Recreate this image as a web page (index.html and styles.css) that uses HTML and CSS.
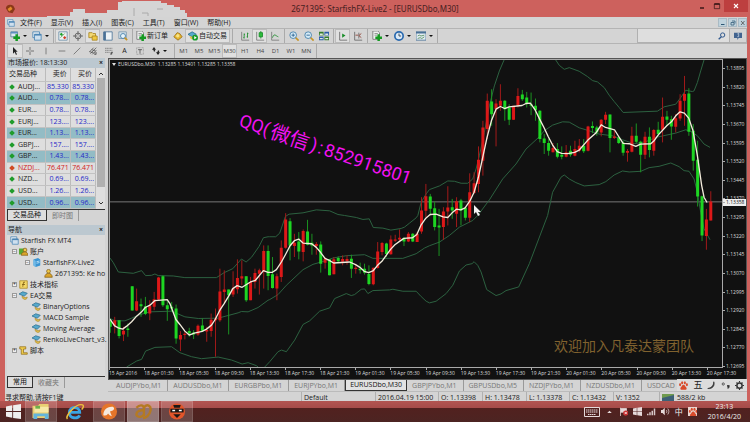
FILE: index.html
```html
<!DOCTYPE html>
<html lang="zh-CN">
<head>
<meta charset="utf-8">
<title>2671395: StarfishFX-Live2 - [EURUSDbo,M30]</title>
<link rel="stylesheet" href="styles.css">
</head>
<body>
<svg class="defs" aria-hidden="true">
  <symbol id="i-add" viewBox="0 0 12 12"><path d="M1 1h8v6H1z" fill="#dce8f0" stroke="#5b7f99"/><path d="M1 2h8" stroke="#5b8fc0" stroke-width="2"/><path d="M8 4v8M4 8h8" stroke="#159a22" stroke-width="3"/></symbol>
  <symbol id="i-windows" viewBox="0 0 12 12"><path d="M1 1h8v7H1z" fill="#e3ecf3" stroke="#4c86b5"/><path d="M3 4h8v7H3z" fill="#cfe0ee" stroke="#4c86b5"/><path d="M3 4.5h8" stroke="#4c86b5" stroke-width="2"/></symbol>
  <symbol id="i-quotes" viewBox="0 0 12 12"><path d="M1 1h10v10H1z" fill="#eef2f2" stroke="#6a8fa8"/><path d="M4 2l2 2-2 2-2-2z" fill="#18a02a"/><path d="M8 6l2 2-2 2-2-2z" fill="#d03a22"/><path d="M3 8l5-5" stroke="#5aa04a"/></symbol>
  <symbol id="i-target" viewBox="0 0 12 12"><circle cx="6" cy="6" r="3.5" fill="none" stroke="#555"/><path d="M6 0v5M6 7v5M0 6h5M7 6h5" stroke="#555"/></symbol>
  <symbol id="i-folder" viewBox="0 0 12 12"><path d="M1 2h4l1 1h3v5H1z" fill="#f3d873" stroke="#a98521"/><path d="M5 6h6v5H5z" fill="#f0c83e" stroke="#a98521"/></symbol>
  <symbol id="i-terminal" viewBox="0 0 12 12"><path d="M1 1h10v10H1z" fill="#eef3f6" stroke="#4a7196"/><path d="M2 1v10" stroke="#4a7196" stroke-width="3"/></symbol>
  <symbol id="i-tester" viewBox="0 0 12 12"><path d="M1 1h9v8H1z" fill="#d4e2ec" stroke="#7b98ad"/><circle cx="6" cy="6" r="3" fill="#e7f3fa" stroke="#3c78a5"/><path d="M8 8l3 3" stroke="#c79426" stroke-width="2"/></symbol>
  <symbol id="i-order" viewBox="0 0 12 12"><path d="M1 0h6l2 2v8H1z" fill="#eef0f0" stroke="#777"/><path d="M3 3h4M3 5h3" stroke="#888"/><path d="M8 4v8M4 8h8" stroke="#159a22" stroke-width="3"/></symbol>
  <symbol id="i-gold" viewBox="0 0 12 12"><path d="M1 7l4-5 3 1 3 4-5 4z" fill="#e5b62d" stroke="#9a701a"/><path d="M3 6l3-3 2 3-2 2z" fill="#f8e386"/></symbol>
  <symbol id="i-expert" viewBox="0 0 12 12"><path d="M0 4l5-3 6 2-4 4z" fill="#57a9cb" stroke="#2d6f91"/><path d="M4 7c0 5 7 6 7 1l-3 1z" fill="#e2bd4a" stroke="#9d7a21" stroke-width=".7"/></symbol>
  <symbol id="i-auto" viewBox="0 0 12 12"><path d="M0 4l5-3 5 3-5 3z" fill="#57a9cb" stroke="#2d6f91"/><path d="M2 6c0 5 5 5 5 0l-2 1z" fill="#e2bd4a"/><circle cx="8.500" cy="8" r="3.500" fill="#169b28"/><path d="M7.500 6v4l3-2z" fill="#fff"/></symbol>
  <symbol id="i-bars" viewBox="0 0 12 12"><path d="M2 1v10h9" fill="none" stroke="#777"/><path d="M5 3v6M4 8h1M5 4h1M9 2v6M8 7h1M9 3h1" stroke="#178c27"/></symbol>
  <symbol id="i-candle" viewBox="0 0 12 12"><path d="M2 1v10h9" fill="none" stroke="#777"/><path d="M7 0v9" stroke="#178c27"/><path d="M5 2h4v5H5z" fill="#2bbd3a" stroke="#178c27"/></symbol>
  <symbol id="i-line" viewBox="0 0 12 12"><path d="M2 1v10h9" fill="none" stroke="#777"/><path d="M3 8c2-6 4-2 7-1" fill="none" stroke="#178c27"/></symbol>
  <symbol id="i-zoomin" viewBox="0 0 12 12"><path d="M7.500 7.500l4 4" stroke="#c79426" stroke-width="2"/><circle cx="5" cy="5" r="4" fill="#d5ebf7" stroke="#3c78a5"/><path d="M5 3v4M3 5h4" stroke="#225a8c"/></symbol>
  <symbol id="i-zoomout" viewBox="0 0 12 12"><path d="M7.500 7.500l4 4" stroke="#c79426" stroke-width="2"/><circle cx="5" cy="5" r="4" fill="#d5ebf7" stroke="#3c78a5"/><path d="M3 5h4" stroke="#225a8c"/></symbol>
  <symbol id="i-tile" viewBox="0 0 12 12"><path d="M0 1h5.500v4.500H0zM6.500 6.500H12V11H6.500z" fill="#357b2c"/><path d="M6.500 1H12v4.500H6.500zM0 6.500h5.500V11H0z" fill="#2b5ba8"/><path d="M1 3h3.500v2H1zM7.500 3H11v2H7.500zM1 8.500h3.500V10H1zM7.500 8.500H11V10H7.500z" fill="#dfe9df"/></symbol>
  <symbol id="i-scroll" viewBox="0 0 12 12"><path d="M2 1v10h9" fill="none" stroke="#666"/><path d="M5 3v5l4-2.500z" fill="#178c27"/></symbol>
  <symbol id="i-shift" viewBox="0 0 12 12"><path d="M2 1v10h9M7 2v7" fill="none" stroke="#666"/><path d="M10 3L7 5.500 10 8M3 5h3" fill="none" stroke="#8d4032"/></symbol>
  <symbol id="i-clock" viewBox="0 0 12 12"><circle cx="6" cy="6" r="5" fill="#dceaf6" stroke="#2868ae" stroke-width="2"/><path d="M6 3v3h2.500" fill="none" stroke="#234"/></symbol>
  <symbol id="i-template" viewBox="0 0 12 12"><path d="M0 1h12v10H0z" fill="#e4edf3" stroke="#4a7196"/><path d="M0 2h12" stroke="#4a7196" stroke-width="2"/><path d="M2 6l2-1 2 1 4-1M2 9l3-1 2 1 3-2" fill="none" stroke="#4e8a58"/></symbol>
  <symbol id="i-arrow" viewBox="0 0 12 12"><path d="M3 0v10l2.500-2.500L7.500 12 9 11 7 7h3z" fill="#222"/></symbol>
  <symbol id="i-cross" viewBox="0 0 12 12"><path d="M6 0v5M6 7v5M0 6h5M7 6h5" stroke="#444"/></symbol>
  <symbol id="i-v" viewBox="0 0 12 12"><path d="M6 1v10" stroke="#555"/></symbol>
  <symbol id="i-h" viewBox="0 0 12 12"><path d="M1 6h10" stroke="#555"/></symbol>
  <symbol id="i-trend" viewBox="0 0 12 12"><path d="M1 11L11 1" stroke="#555"/></symbol>
  <symbol id="i-channel" viewBox="0 0 12 12"><path d="M0 8l7-7M2 10l9-9M5 11l6-6M1 7l6 2M4 4l6 2" stroke="#444"/><path d="M8 9h4M8 11h3" stroke="#222"/></symbol>
  <symbol id="i-fibo" viewBox="0 0 12 12"><path d="M0 2h11M0 5h11M0 8h7" stroke="#666" stroke-dasharray="2 .5"/><path d="M9 12V8h3M9 10h2" fill="none" stroke="#222"/></symbol>
  <symbol id="i-label" viewBox="0 0 12 12"><path d="M1 1h10v10H1z" fill="none" stroke="#777" stroke-dasharray="1 1"/><path d="M3 4h6M6 4v6" stroke="#333"/></symbol>
  <symbol id="i-shapes" viewBox="0 0 12 12"><path d="M3 0L0 4h2l1 3 2-1-1-2h2zM9 12L6 8h2l1-3 2 1-1 2h2z" fill="#222"/></symbol>
  <symbol id="i-find" viewBox="0 0 12 12"><circle cx="7" cy="4.500" r="3.200" fill="none" stroke="#31598e" stroke-width="1.500"/><path d="M5 7l-4 4" stroke="#31598e" stroke-width="2"/></symbol>
  <symbol id="i-chat" viewBox="0 0 12 12"><path d="M0 1h12v8H7l-2 3V9H0z" fill="#41638f"/><path d="M5 3l2-1v5H5" fill="none" stroke="#dce4ee"/></symbol>
  <symbol id="i-user" viewBox="0 0 12 12"><circle cx="6" cy="3" r="2.500" fill="#efc94b" stroke="#86621a"/><path d="M1 11c0-7 10-7 10 0z" fill="#dba52a" stroke="#86621a"/></symbol>
  <symbol id="i-users" viewBox="0 0 12 12"><path d="M0 2h7v8H0z" fill="#57a932"/><circle cx="8" cy="4" r="2.500" fill="#efc94b" stroke="#86621a"/><path d="M3 11c0-6 9-6 9 0z" fill="#dba52a" stroke="#86621a"/></symbol>
  <symbol id="i-server" viewBox="0 0 12 12"><path d="M2 2l6-2 3 2v8l-6 2-3-2z" fill="#3c95d2"/><path d="M2 2l3 2v8l-3-2z" fill="#72bbe8"/><path d="M6 5l4-1M6 7l4-1" stroke="#d7effb"/></symbol>
  <symbol id="i-func" viewBox="0 0 12 12"><path d="M1 1h10v10H1z" fill="#f2d667" stroke="#a98521"/><path d="M8 3H6L5 9M4 6h4" fill="none" stroke="#76540d"/></symbol>
  <symbol id="i-script" viewBox="0 0 12 12"><path d="M1 1h8v3H6v5h5v2H3V4H1z" fill="#efcc4b" stroke="#94701c"/></symbol>
  <symbol id="i-paw" viewBox="0 0 12 12"><path d="M6 5c2 0 2 2 4 4 1 3-2 3-4 2.500-2 .5-5 .5-4-2.500 2-2 2-4 4-4z"/><ellipse cx="1.500" cy="5" rx="1.400" ry="1.900"/><ellipse cx="4.200" cy="2.200" rx="1.400" ry="2"/><ellipse cx="7.800" cy="2.200" rx="1.400" ry="2"/><ellipse cx="10.500" cy="5" rx="1.400" ry="1.900"/></symbol>
  <symbol id="i-win" viewBox="0 0 12 12"><path d="M0 2l5-1v4.600H0zM5.700.9L12 0v5.600H5.700zM0 6.300h5V11l-5-1zM5.700 6.300H12V12l-6.300-.9z"/></symbol>
</svg>

<div class="app">
  <header class="titlebar">
    <svg class="app-icon" viewBox="0 0 12 12"><path d="M1 5c1-4 5-5 9-3l2 4-3 5-5-1z" fill="#8a3818"/><path d="M3 6l4-3 2 3-4 3z" fill="#e28b2a"/></svg>
    <h1>2671395: StarfishFX-Live2 - [EURUSDbo,M30]</h1>
    <div class="win-buttons">
      <button aria-label="最小化"><svg viewBox="0 0 12 12"><path d="M3 9h6" stroke="#2a1010" stroke-width="2"/></svg></button>
      <button aria-label="最大化"><svg viewBox="0 0 12 12"><path d="M2 3h8v7H2z" fill="none" stroke="#2a1010"/><path d="M2 3h8" stroke="#2a1010" stroke-width="2"/></svg></button>
      <button class="close" aria-label="关闭"><svg viewBox="0 0 12 12"><path d="M3 3l6 6M9 3L3 9" stroke="#fff" stroke-width="1.600"/></svg></button>
    </div>
    <svg class="mask" viewBox="0 0 140 18" aria-hidden="true"><path d="M0 17v-1h23v-4h3V9h12v4h22v-3h11V2h4V1h39v2h6v2h7v2h6v3h5v3h2v4z" fill="#d5d5d5"/><path d="M87 8v8M95 13h6v3M110 9h6" fill="none" stroke="#aaa"/></svg>
  </header>

  <div class="frame">
    <nav class="menubar">
      <svg class="ic"><use href="#i-windows"/></svg>
      <button>文件(F)</button><button>显示(V)</button><button>插入(I)</button><button>图表(C)</button><button>工具(T)</button><button>窗口(W)</button><button>帮助(H)</button>
      <div class="mdi">
        <button aria-label="最小化子窗口"><svg viewBox="0 0 12 12"><path d="M2 9h7" stroke="#2d5674" stroke-width="2"/></svg></button>
        <button aria-label="还原子窗口"><svg viewBox="0 0 12 12"><path d="M4 2h6v5M2 5h6v5H2z" fill="none" stroke="#2d5674" stroke-width="1.500"/></svg></button>
        <button aria-label="关闭子窗口"><svg viewBox="0 0 12 12"><path d="M2 2l7 8M9 2l-7 8" stroke="#444" stroke-width="1.500"/></svg></button>
      </div>
    </nav>

    <div class="toolbar">
      <div class="group">
        <button class="drop" aria-label="新图表"><svg class="ic"><use href="#i-add"/></svg></button>
        <button class="drop" aria-label="配置文件"><svg class="ic"><use href="#i-windows"/></svg></button>
      </div>
      <div class="group">
        <button class="on" aria-label="市场报价"><svg class="ic"><use href="#i-quotes"/></svg></button>
        <button aria-label="数据窗口"><svg class="ic"><use href="#i-target"/></svg></button>
        <button class="on" aria-label="导航"><svg class="ic"><use href="#i-folder"/></svg></button>
        <button aria-label="终端"><svg class="ic"><use href="#i-terminal"/></svg></button>
        <button aria-label="策略测试"><svg class="ic"><use href="#i-tester"/></svg></button>
      </div>
      <div class="group wide">
        <button class="text"><svg class="ic"><use href="#i-order"/></svg>新订单</button>
        <button aria-label="语言编辑器"><svg class="ic"><use href="#i-gold"/></svg></button>
        <button class="text on"><svg class="ic"><use href="#i-auto"/></svg>自动交易</button>
      </div>
      <div class="group">
        <button aria-label="柱状图"><svg class="ic"><use href="#i-bars"/></svg></button>
        <button class="on" aria-label="蜡烛图"><svg class="ic"><use href="#i-candle"/></svg></button>
        <button aria-label="折线图"><svg class="ic"><use href="#i-line"/></svg></button>
      </div>
      <div class="group">
        <button aria-label="放大"><svg class="ic"><use href="#i-zoomin"/></svg></button>
        <button aria-label="缩小"><svg class="ic"><use href="#i-zoomout"/></svg></button>
        <button aria-label="平铺"><svg class="ic"><use href="#i-tile"/></svg></button>
      </div>
      <div class="group">
        <button class="on" aria-label="自动滚动"><svg class="ic"><use href="#i-scroll"/></svg></button>
        <button aria-label="图表平移"><svg class="ic"><use href="#i-shift"/></svg></button>
      </div>
      <div class="group">
        <button class="drop" aria-label="指标"><svg class="ic"><use href="#i-order"/></svg></button>
        <button class="drop" aria-label="周期"><svg class="ic"><use href="#i-clock"/></svg></button>
        <button class="drop" aria-label="模板"><svg class="ic"><use href="#i-template"/></svg></button>
      </div>
      <form class="search">
        <input type="text" aria-label="搜索">
        <button type="button" aria-label="查找"><svg class="ic"><use href="#i-find"/></svg></button>
        <button type="button" class="chat" aria-label="消息"><svg class="ic"><use href="#i-chat"/></svg></button>
      </form>
    </div>

    <div class="toolbar second">
      <div class="group draw">
        <button class="on" aria-label="光标"><svg class="ic"><use href="#i-arrow"/></svg></button>
        <button aria-label="十字线"><svg class="ic"><use href="#i-cross"/></svg></button>
        <button aria-label="垂直线"><svg class="ic"><use href="#i-v"/></svg></button>
        <button aria-label="水平线"><svg class="ic"><use href="#i-h"/></svg></button>
        <button aria-label="趋势线"><svg class="ic"><use href="#i-trend"/></svg></button>
        <button aria-label="通道"><svg class="ic"><use href="#i-channel"/></svg></button>
        <button aria-label="斐波那契"><svg class="ic"><use href="#i-fibo"/></svg></button>
        <button class="letter">A</button>
        <button aria-label="文字标签"><svg class="ic"><use href="#i-label"/></svg></button>
        <button class="drop" aria-label="箭头"><svg class="ic"><use href="#i-shapes"/></svg></button>
      </div>
      <div class="group periods">
        <button>M1</button><button>M5</button><button>M15</button><button class="on">M30</button><button>H1</button><button>H4</button><button>D1</button><button>W1</button><button>MN</button>
      </div>
    </div>

    <div class="work">
      <aside class="side">
        <section class="panel">
          <h2>市场报价: 18:13:30 <button aria-label="关闭市场报价">×</button></h2>
          <div class="quotes">
            <table>
              <thead><tr><th>交易品种</th><th>卖价</th><th>买价</th></tr></thead>
              <tbody>
                <tr><td>AUDJ...</td><td>85.330</td><td>85.330</td></tr>
                <tr class="alt"><td>AUD...</td><td>0.78...</td><td>0.78...</td></tr>
                <tr><td>EUR...</td><td>0.78...</td><td>0.78...</td></tr>
                <tr><td>EURJ...</td><td>123....</td><td>123....</td></tr>
                <tr class="alt"><td>EUR...</td><td>1.13...</td><td>1.13...</td></tr>
                <tr><td>GBPJ...</td><td>157....</td><td>157....</td></tr>
                <tr class="alt"><td>GBP...</td><td>1.43...</td><td>1.43...</td></tr>
                <tr class="down"><td>NZDJ...</td><td>76.471</td><td>76.471</td></tr>
                <tr><td>NZD...</td><td>0.69...</td><td>0.69...</td></tr>
                <tr><td>USD...</td><td>1.26...</td><td>1.26...</td></tr>
                <tr class="alt"><td>USD...</td><td>0.96...</td><td>0.96...</td></tr>
              </tbody>
            </table>
            <div class="scroll"><svg viewBox="0 0 8 8"><path d="M2 5l2-2 2 2" fill="none" stroke="#333"/></svg><i></i><svg viewBox="0 0 8 8"><path d="M2 3l2 2 2-2" fill="none" stroke="#333"/></svg></div>
          </div>
          <div class="subtabs"><button class="on">交易品种</button><button>即时图</button></div>
        </section>
        <section class="panel grow">
          <h2>导航 <button aria-label="关闭导航">×</button></h2>
          <ul class="tree">
            <li><svg class="ic"><use href="#i-windows"/></svg>Starfish FX MT4</li>
            <li class="l1"><b>−</b><svg class="ic"><use href="#i-users"/></svg>账户</li>
            <li class="l2"><b>−</b><svg class="ic"><use href="#i-server"/></svg>StarfishFX-Live2</li>
            <li class="l4"><svg class="ic"><use href="#i-user"/></svg>2671395: Ke ho</li>
            <li class="l1"><b>+</b><svg class="ic"><use href="#i-func"/></svg>技术指标</li>
            <li class="l1"><b>−</b><svg class="ic"><use href="#i-expert"/></svg>EA交易</li>
            <li class="l3"><svg class="ic"><use href="#i-expert"/></svg>BinaryOptions</li>
            <li class="l3"><svg class="ic"><use href="#i-expert"/></svg>MACD Sample</li>
            <li class="l3"><svg class="ic"><use href="#i-expert"/></svg>Moving Average</li>
            <li class="l3"><svg class="ic"><use href="#i-expert"/></svg>RenkoLiveChart_v3.</li>
            <li class="l1"><b>+</b><svg class="ic"><use href="#i-script"/></svg>脚本</li>
          </ul>
          <div class="subtabs"><button class="on">常用</button><button>收藏夹</button></div>
        </section>
      </aside>

      <main class="main">
        <div class="chart">
          <div class="plot">
            <svg id="plot" viewBox="15 12 1839 924" preserveAspectRatio="none" role="img" aria-label="EURUSDbo M30"></svg>
            <p class="caption">EURUSDbo,M30&nbsp; 1.13285 1.13401 1.13285 1.13358</p>
            <p class="contact">QQ(<span>微信</span>)<span class="colon">:</span>852915801</p>
            <p class="welcome">欢迎加入凡泰达蒙团队</p>
            <svg class="cursor" viewBox="0 0 8 12"><path d="M1 0v9l2-2 2 4 2-1-2-3h3z" fill="#f2f2f2"/></svg>
          </div>
          <ol class="prices">
            <li>1.13895</li><li>1.13820</li><li>1.13745</li><li>1.13670</li><li>1.13595</li><li>1.13520</li><li>1.13445</li><li>1.13370</li><li>1.13295</li><li>1.13220</li><li>1.13145</li><li>1.13070</li><li>1.12995</li><li>1.12920</li><li>1.12845</li><li>1.12770</li><li>1.12695</li>
            <li class="now">1.13358</li>
          </ol>
          <ol class="times">
            <li>15 Apr 2016</li><li>18 Apr 01:30</li><li>18 Apr 05:30</li><li>18 Apr 09:30</li><li>18 Apr 13:30</li><li>18 Apr 17:30</li><li>18 Apr 21:30</li><li>19 Apr 01:30</li><li>19 Apr 05:30</li><li>19 Apr 09:30</li><li>19 Apr 13:30</li><li>19 Apr 17:30</li><li>19 Apr 21:30</li><li>20 Apr 01:30</li><li>20 Apr 05:30</li><li>20 Apr 09:30</li><li>20 Apr 13:30</li><li>20 Apr 17:30</li>
          </ol>
        </div>
        <div class="tabs">
          <button>AUDJPYbo,M1</button><button>AUDUSDbo,M1</button><button>EURGBPbo,M1</button><button>EURJPYbo,M1</button><button class="on">EURUSDbo,M30</button><button>GBPJPYbo,M1</button><button>GBPUSDbo,M5</button><button>NZDJPYbo,M1</button><button>NZDUSDbo,M1</button><button>USDCAD</button>
          <div class="ime"><svg class="ic paw"><use href="#i-paw"/></svg><span>五</span><svg class="ic" viewBox="0 0 12 12"><path d="M9 1c2 5-2 10-8 9 5-1 8-4 8-9z" fill="#333" stroke="#333"/></svg><svg class="ic" viewBox="0 0 12 12"><circle cx="3" cy="4" r="1.500" fill="none" stroke="#333"/><path d="M8 6h3c0 3-1 4-2 4" fill="#333" stroke="#333"/></svg><svg class="ic" viewBox="0 0 12 12"><circle cx="6" cy="6" r="3.500" fill="none" stroke="#333" stroke-width="2"/><path d="M6 0v2M6 10v2M0 6h2M10 6h2M2 2l1 1M9 9l1 1M10 2L9 3M3 9l-1 1" stroke="#333" stroke-width="1.500"/></svg></div>
        </div>
      </main>
    </div>

    <footer class="status">
      <span>寻求帮助,请按F1键</span><span>Default</span><span>2016.04.19 15:00</span><span>O: 1.13398</span><span>H: 1.13478</span><span>L: 1.13378</span><span>C: 1.13432</span><span>V: 1352</span><span class="net"><svg viewBox="0 0 12 7"><path d="M0 0h12v7H0z" fill="#6f9b4e"/><path d="M0 7V4l12-3v6z" fill="#3d6076"/></svg>588/2 kb</span>
    </footer>
  </div>

  <div class="taskbar">
    <button class="start" aria-label="开始"><svg viewBox="0 0 12 12"><use href="#i-win"/></svg></button>
    <button class="open" aria-label="文件资源管理器"><svg viewBox="0 0 20 18"><path d="M1 3h6l1-2h10v15H1z" fill="#e9cf72"/><path d="M3 4h15v6H3z" fill="#f7e9a6"/><path d="M4 3h5v3H4z" fill="#6fb04a"/><path d="M2 17v-6h16v6h-4v-3H6v3z" fill="#63b5dc"/></svg></button>
    <button aria-label="Internet Explorer"><svg viewBox="0 0 20 18"><path d="M15 13c-2 4-11 4-11-3s11-7 11 0H5" fill="none" stroke="#3aa5e4" stroke-width="3"/><path d="M2 17C-1 14 11 0 18 2c2 1 0 4-1 5" fill="none" stroke="#edc13c" stroke-width="1.500"/></svg></button>
    <button class="open" aria-label="浏览器"><svg viewBox="0 0 20 18"><circle cx="10" cy="9" r="8.500" fill="#e5752a"/><path d="M4 13c0-5 3-9 9-9 3 0 3 3 1 4l-3 1 2 5c-3-1-4-3-4-3s-1 3-5 2z" fill="#f5e9de"/></svg></button>
    <button class="open active" aria-label="MetaTrader 4"><svg viewBox="0 0 20 18"><path d="M3 5c4-4 8-3 8 1v8M11 8c-4-1-8 1-8 4s6 4 8 0M11 5c3-5 8-2 7 3s-5 8-8 8" fill="none" stroke="#b57a22" stroke-width="2.500"/></svg></button>
    <button class="open" aria-label="助手"><svg viewBox="0 0 20 18"><circle cx="10" cy="9" r="8.500" fill="#e2552a"/><path d="M3 6h14v4H3z" fill="#1c1715"/><path d="M5 8h3M12 8h3" stroke="#fff" stroke-width="1.500"/><path d="M6 12h8l-4 4z" fill="#1c1715"/><path d="M6 2h8l-1 3H7z" fill="#1c1715"/></svg></button>
    <div class="tray">
      <svg class="kb" viewBox="0 0 16 10"><path d="M.500.500h15v9H.500z" fill="none" stroke="#e6dada"/><path d="M2 3h12M2 5h12M4 7.500h8" stroke="#e6dada" stroke-dasharray="1.500 .5"/></svg>
      <svg viewBox="0 0 12 12"><path d="M3 8l3-3 3 3z" fill="#e6dada"/></svg>
      <svg viewBox="0 0 12 12"><path d="M2 1v11M2 2h8v5H2" fill="#e6dada" stroke="#e6dada"/><circle cx="9" cy="8" r="3.500" fill="#c92f2f"/><path d="M7.500 6.500l3 3M10.500 6.500l-3 3" stroke="#fff"/></svg>
      <svg viewBox="0 0 12 12" fill="#e6dada"><use href="#i-win"/></svg>
      <svg viewBox="0 0 12 12"><path d="M0 11h2V9H0zM3 11h2V7H3zM6 11h2V5H6zM9 11h2V2H9z" fill="#d6c8c8"/></svg>
      <svg viewBox="0 0 12 12"><path d="M0 4h2l3-3v10L2 8H0z" fill="#e6dada"/><path d="M7 4c1 1 1 3 0 4M9 2c2 3 2 5 0 8" fill="none" stroke="#e6dada"/></svg>
      <span>中</span>
      <svg class="pawbox" viewBox="-1 -1 14 14"><use href="#i-paw"/></svg>
      <time>23:13<br>2016/4/20</time>
    </div>
  </div>
</div>
<script src="chart.js"></script>
</body>
</html>
```
FILE: styles.css
```css
* { box-sizing: border-box; }
body, h1, h2, p, ul, ol { margin: 0; padding: 0; }
ul, ol { list-style: none; }
body {
  font: 7px/10px "Open Sans", "Noto Sans CJK SC", sans-serif;
  color: #222;
  background: #cd615d;
  overflow: hidden;
}
button {
  font: inherit;
  color: inherit;
  background: none;
  border: 0;
  padding: 0;
  display: flex;
  align-items: center;
  justify-content: center;
  white-space: nowrap;
}
svg { display: block; flex: none; }
.defs { position: absolute; width: 0; height: 0; }
.ic { width: 10px; height: 10px; }
.app { height: 100vh; display: flex; flex-direction: column; }

/* window title */
.titlebar {
  position: relative;
  flex: none;
  height: 17px;
  display: flex;
  align-items: center;
  justify-content: center;
  background: #cd615d;
}
.titlebar h1 { font: 400 8px/10px "Noto Sans", sans-serif; color: #45201f; }
.app-icon { position: absolute; left: 5px; top: 4px; width: 10px; height: 10px; }
.mask { position: absolute; left: 47px; top: 0; width: 140px; height: 18px; }
.win-buttons { position: absolute; right: 2px; top: 0; display: flex; }
.win-buttons button { width: 15px; height: 12px; }
.win-buttons svg { width: 8px; height: 8px; }
.win-buttons .close { width: 24px; background: #bd3f3f; }

.frame {
  flex: 1;
  min-height: 0;
  margin: 0 3px 0 5px;
  display: flex;
  flex-direction: column;
  background: #d4d4d4;
}

/* menu */
.menubar { flex: none; height: 11px; display: flex; align-items: center; gap: 9px; padding-left: 2px; }
.menubar > .ic { width: 8px; height: 8px; margin-right: -4px; }
.mdi { margin-left: auto; display: flex; gap: 1px; }
.mdi button { width: 9px; height: 9px; background: #bfd2dc; border: 1px solid #a9bac4; }
.mdi svg { width: 6px; height: 6px; }

/* toolbars */
.toolbar { flex: none; height: 15px; display: flex; border-top: 1px solid #b4b4b4; }
.group { display: flex; align-items: center; padding: 0 2px 0 1px; border-right: 1px solid #aaa; }
.group:first-child { padding-left: 2px; }
.group button { width: 15px; height: 14px; }
.group .drop { width: 22px; gap: 3px; }
.drop::after { content: ""; border: 2px solid transparent; border-top-color: #111; border-bottom: 0; }
.group .on { background: #e0e0e0; border: 1px solid #bcbcbc; }
.group .text { width: auto; padding: 0 2px; gap: 1px; }
.wide { margin-right: 3px; }
.search { margin-left: auto; display: flex; width: 110px; border: 1px solid #b0b0b0; border-top: 0; background: #dedede; }
.search input { flex: 1; min-width: 0; border: 0; padding: 0 2px; background: none; font: inherit; }
.search button { width: 14px; }
.search .ic { width: 8px; height: 8px; }
.search .chat { width: 17px; background: #d4d4d4; border-left: 1px solid #b0b0b0; }
.draw { display: grid; grid-template-columns: repeat(9, 1fr) 24px; width: 170px; }
.draw button { width: auto; }
.draw .ic { width: 8px; height: 8px; }
.periods { display: grid; grid-template-columns: repeat(9, 1fr); width: 142px; font-size: 6px; color: #444; }
.periods button { width: auto; }

/* side panels */
.work { flex: 1; min-height: 0; display: flex; }
.side { flex: none; width: 103px; padding: 0 3px 3px 2px; display: flex; flex-direction: column; gap: 3px; }
.panel { display: flex; flex-direction: column; }
.grow { flex: 1; min-height: 0; }
.panel h2 { flex: none; height: 10px; display: flex; justify-content: space-between; align-items: center; font-size: 7px; font-weight: 400; background: #bcc8d0; padding: 0 2px 0 1px; }
.panel h2 button { font-weight: 700; }
.quotes { display: flex; background: #dedede; }
table { flex: 1; height: 141px; table-layout: fixed; border-collapse: collapse; line-height: 8px; }
th, td { padding: 0 1px; border-right: 1px solid #bbb; border-bottom: 1px solid #c2c2c2; text-align: right; white-space: nowrap; color: #2527c8; }
th { color: #222; font-weight: 400; height: 13px; padding-right: 3px; }
th:first-child { width: 38px; padding-left: 2px; text-align: left; }
td:first-child { padding-left: 2px; text-align: left; color: #222; }
td:first-child::before { content: ""; display: inline-block; width: 4px; height: 4px; margin: 0 4px 0 1px; background: #1f9c2b; transform: rotate(45deg); }
.alt td { background: #93bcc5; }
.down td { color: #d22020; }
.down td:first-child::before { background: #d04a22; }
.scroll { width: 9px; display: flex; flex-direction: column; align-items: center; padding: 2px 0; }
.scroll svg { width: 8px; height: 8px; }
.scroll i { flex: 1; width: 8px; margin-bottom: 12px; background: #b0b0b0; }
.subtabs { flex: none; height: 13px; display: flex; border-top: 1px solid #333; }
.subtabs button { padding: 0 5px; color: #777; height: 11px; border-right: 1px solid #999; }
.subtabs .on { color: #111; background: #dedede; border: 1px solid #333; border-top: 0; }
.tree { flex: 1; padding-left: 3px; background: #dadada; }
.tree li { height: 11px; display: flex; align-items: center; gap: 2px; white-space: nowrap; }
.tree .ic { width: 9px; height: 9px; }
.tree b { width: 5px; height: 5px; border: 1px solid #999; font-size: 5px; line-height: 3px; text-align: center; font-weight: 400; background: #eee; }
.tree .l1 { padding-left: 2px; }
.tree .l2 { padding-left: 15px; }
.tree .l3 { padding-left: 22px; }
.tree .l4 { padding-left: 34px; }

/* chart */
.main { flex: 1; min-width: 0; display: flex; flex-direction: column; }
.chart {
  flex: 1;
  min-height: 0;
  display: grid;
  grid-template: minmax(0, 1fr) 11px / minmax(0, 1fr) 23px;
  border: 1px solid #555;
  background: #111;
  color: #ddd;
  font-size: 5px;
  line-height: 7px;
}
.plot { position: relative; border: 1px solid #aaa; }
#plot { width: 100%; height: 100%; }
.caption { position: absolute; left: 8px; top: 1px; white-space: nowrap; }
.caption::before { content: ""; position: absolute; left: -6px; top: 2px; border: 2px solid transparent; border-top: 3px solid #ddd; border-bottom: 0; }
.contact { position: absolute; left: 125px; top: 80px; width: 184px; display: flex; white-space: nowrap; font: 18px/20px Roboto, "Noto Sans CJK SC", sans-serif; color: #f312f3; transform: rotate(19deg); }
.contact span { margin: 0 2px; font-size: 20px; }
.contact .colon { font-size: 18px; }
.welcome { position: absolute; right: 28px; bottom: 10px; font: 14px/20px "Liberation Serif", "Noto Sans CJK SC", serif; color: #80622f; }
.cursor { position: absolute; left: 363px; top: 145px; width: 8px; height: 12px; }
.prices { position: relative; display: flex; flex-direction: column; justify-content: space-between; padding-top: 6px; margin-bottom: -2px; }
.prices li { padding-left: 3px; position: relative; }
.prices li::before { content: ""; position: absolute; left: 0; top: 3px; width: 2px; height: 1px; background: #aaa; }
.prices .now { position: absolute; top: 46%; left: 0; right: 0; margin-top: -3px; background: #eee; color: #111; }
.times { grid-column: 1 / 3; display: grid; grid-template-columns: repeat(18, 1fr); margin-right: 4px; padding-top: 1px; }
.times li { white-space: nowrap; position: relative; padding-top: 1px; }
.times li::before { content: ""; position: absolute; left: 0; top: -1px; width: 1px; height: 2px; background: #aaa; }

/* chart tabs */
.tabs { position: relative; flex: none; height: 12px; display: flex; padding-left: 3px; color: #777; border-bottom: 1px solid #bbb; }
.tabs > button { flex: none; height: 11px; padding: 0 6px 0 5px; border-right: 1px solid #999; }
.tabs > .on { padding: 0 4px; color: #111; background: #e2e2e2; border: 1px solid #333; border-top: 0; }
.ime { position: absolute; right: 0; top: -1px; width: 70px; height: 12px; display: flex; align-items: center; justify-content: space-around; background: #dcdcdc; color: #222; font-size: 9px; }
.ime .ic { width: 9px; height: 9px; }
.paw { fill: #d94b2b; }

/* status line */
.status { flex: none; height: 9px; display: grid; grid-template-columns: 297px 74px 63px 44px 44px 43px 44px 46px 1fr; line-height: 12px; overflow: hidden; }
.status span { padding-left: 2px; border-right: 1px solid #b0b0b0; white-space: nowrap; }
.status span:nth-child(1) { padding-left: 0; }
.status .net { display: flex; gap: 3px; border: 0; }
.net svg { width: 12px; height: 7px; margin-top: 2px; }

/* desktop taskbar */
.taskbar { flex: none; height: 21px; display: flex; padding-left: 4px; background: linear-gradient(#b25551, #a64b49 7px, #52211f 7px, #4c2422); }
.taskbar button { width: 32px; margin-right: 2px; }
.taskbar button svg { width: 20px; height: 17px; }
.taskbar .start { width: 19px; }
.taskbar .start svg { width: 15px; height: 15px; fill: #eee; }
.taskbar .open { background: rgb(255 255 255 / .16); border: 1px solid rgb(255 255 255 / .12); }
.taskbar .active { background: rgb(255 255 255 / .38); }
.tray { margin-left: auto; display: flex; align-items: center; gap: 5px; padding-right: 9px; color: #eee; font-size: 8px; }
.tray svg { width: 9px; height: 9px; }
.tray .kb { width: 16px; height: 10px; }
.tray .pawbox { background: #e8d6d0; fill: #d94b2b; }
.tray time { margin-left: 6px; font-size: 7px; line-height: 10px; text-align: center; }
```
FILE: chart.js
```js
// Candles in time order: colour, body top, body bottom, wick top, wick bottom.
const candles = `
g 797 815 790 833,r 795 812 785 835,g 795 843 795 850,r 827 838 815 858,g 820 825 805 845,g 693 766 693 766,r 738 766 700 768,g 747 753 730 785,g 753 776 725 780,r 752 775 735 795,
r 732 755 710 765,r 667 733 665 735,g 663 750 660 755,g 750 762 735 797,g 755 760 740 770,g 760 850 748 866,r 840 853 828 888,r 836 840 828 853,g 828 835 818 845,g 832 838 825 852,
r 812 838 808 842,g 811 828 790 830,r 825 829 815 860,r 794 828 775 845,r 790 795 760 905,r 709 795 640 800,r 703 710 645 745,g 703 720 703 838,r 700 718 648 725,r 668 702 612 715,
r 663 670 615 690,g 663 735 663 740,r 680 735 665 735,r 653 680 640 700,r 645 655 640 718,r 587 648 570 700,g 587 662 570 705,g 657 698 605 700,
r 663 700 655 735,r 577 665 555 680,r 492 577 473 580,g 497 570 488 615,r 562 572 535 605,g 558 588 530 612,r 527 590 522 618,g 528 568 493 570,g 562 570 535 598,r 566 572 560 598,
g 567 625 558 652,r 610 622 605 640,g 612 660 612 660,r 612 657 605 657,g 608 618 603 622,r 611 619 600 630,r 611 618 600 628,g 610 640 598 668,r 637 641 628 655,g 640 645 622 655,
g 640 652 625 658,g 656 686 630 690,r 637 687 637 690,r 588 638 560 640,r 563 590 560 600,g 564 596 562 605,r 552 597 540 598,r 552 556 538 560,r 547 552 522 556,g 548 558 545 572,
r 535 558 530 560,g 535 558 533 560,r 535 560 530 560,r 465 528 425 535,r 422 466 385 485,g 423 460 415 480,g 458 515 438 525,g 510 516 460 602,
r 468 515 455 553,r 456 468 392 510,g 455 465 430 490,r 437 475 425 515,g 435 465 430 510,g 457 487 455 495,r 410 487 353 500,r 383 412 350 415,r 312 385 272 410,r 215 315 195 360,
r 135 220 113 250,g 137 175 100 210,r 143 160 130 272,r 135 150 85 165,g 135 160 133 195,g 155 192 145 208,r 150 192 150 192,r 120 150 97 155,g 116 130 102 135,g 125 143 108 155,
g 145 150 110 178,g 150 163 128 195,g 165 250 163 260,g 248 262 235 295,g 262 285 250 300,r 277 290 262 290,g 280 303 262 308,g 297 303 272 311,r 290 303 268 305,g 285 297 270 303,
r 280 300 255 302,r 270 285 250 290,g 270 287 250 292,r 212 285 210 287,g 211 217 197 232,g 215 230 210 240,
r 192 230 190 242,r 177 192 168 205,g 176 247 176 290,r 242 247 225 250,g 245 262 240 265,g 260 291 255 300,r 286 291 280 318,r 240 288 213 290,g 240 258 203 262,g 258 297 255 350,
r 243 297 228 310,g 243 283 215 305,r 223 285 220 300,g 222 235 198 240,r 183 222 125 260,g 182 192 165 210,g 190 212 180 252,r 187 213 175 230,r 135 188 115 195,r 114 135 60 210,
g 113 228 97 240,g 225 315 205 345,g 312 423 255 453,g 422 540 420 557,r 492 542 460 583,r 438 495 407 495`;

// Indicator lines; each run of points starts from its own x offset.
const bands = [
  [[0, "15,608 25,622 40,650 85,654 110,646 122,661 140,660 150,656 160,661 205,662 240,667 335,667 358,652 384,640 410,611 424,620 440,606 463,573 476,547 490,544"],
   [495, "0,544 18,544 30,533 47,483 58,476 100,472 140,463 180,466 205,477 225,480 260,486 280,492 299,490 311,516 340,518 364,524 395,519 405,515 420,503 440,487 445,480 455,440 470,415"],
   [975, "0,402 30,391 55,376 75,377 95,383 115,383 130,370 140,340 150,300 165,230 180,150 195,90 210,45 225,10"]],
  [[975, "378,10 390,28 405,40 420,35"],
   [1425, "0,46 25,62 40,74 55,78 75,95 90,118 105,137 120,155 132,170 235,166 255,153 290,145 305,125 320,103 340,107 345,105 355,80 365,45 375,12"]],
  [[0, "15,790 30,797 60,797 80,789 100,780 135,770 200,768 240,785 280,790 340,789 400,773 410,769 430,770 460,757 490,735"],
   [495, "0,733 25,718 50,690 100,643 130,627 165,617 190,608 230,601 285,598 310,609 400,609 440,595 465,578"],
   [975, "0,571 30,560 60,540 90,515 130,495 145,480 180,433 220,370 260,325 290,280 330,243 345,225 370,208 400,198 420,199"],
   [1425, "0,216 20,222 60,235 100,240 130,252 165,264 200,258 230,245 290,232 320,222 335,227 355,240 375,265 393,275"]],
  [[0, "65,936 95,918 110,913 122,888 150,877 200,875 225,893 260,905 290,911 340,906 380,915 412,927 430,923 455,932 460,936"]],
  [[0, "480,936"],
   [495, "0,920 25,890 35,885 50,890 75,855 100,808 120,797 150,768 180,758 195,730 230,715 245,721 255,718 275,702 285,701 295,715 310,706 360,704 370,702 400,708 440,708 455,724 470,738"],
   [975, "0,743 20,738 50,715 70,690 90,647 110,629 128,625 134,619 145,630 155,650 172,703 200,721 215,716 230,706 268,695 300,625 355,480 370,410 395,365 405,358 420,370 440,381"],
   [1425, "15,391 60,387 80,378 105,358 130,346 150,349 185,347 210,336 240,332 275,322 300,333 315,345 330,347 345,370 355,410 365,470 375,520 393,553"]]
];
const average = [
  [0, "15,792 29,812 40,818 53,822 65,813 80,800 95,783 110,770 121,757 135,750 150,736 187,733 195,745 213,793 225,808 240,828 253,840 268,834 292,829 305,822 320,810 331,793 345,765 358,745 372,722 384,700 397,691 412,696 437,680 452,675 476,646 490,651"],
  [495, "8,651 20,643 35,620 47,598 61,571 74,556 87,551 100,563 126,565 140,576 152,590 166,609 179,615 192,623 240,620 258,628 271,636 284,648 297,652 310,647 324,630 337,618 350,600 363,582 376,568 390,558 403,549 429,547 442,537 455,508 469,488 482,477"],
  [975, "20,476 41,484 55,486 68,472 81,461 94,463 107,457 121,437 134,410 147,365 160,305 173,245 186,195 200,160 213,152 226,158 239,153 278,149 290,143 303,142 318,163 331,190 344,215 357,243 370,268 384,288 397,293 415,294 436,290"],
  [1425, "0,283 26,253 50,232 66,207 79,215 106,222 119,243 132,263 150,264 170,272 184,265 215,264 224,256 237,238 263,210 277,198 290,180 303,168 316,172 329,187 342,225 355,300 368,390 375,425 384,441"]
];

const plot = document.getElementById("plot");
const draw = (d, stroke, width) => {
  const path = document.createElementNS("http://www.w3.org/2000/svg", "path");
  path.setAttribute("d", d);
  path.setAttribute("fill", "none");
  path.setAttribute("stroke", stroke);
  path.setAttribute("stroke-width", width);
  path.setAttribute("stroke-linejoin", "round");
  plot.append(path);
};
const trace = runs => "M" + runs.flatMap(([offset, points]) =>
  points.split(" ").map(p => {
    const [x, y] = p.split(",").map(Number);
    return `${x + offset} ${y}`;
  })).join("L");

draw("M15 439H1854", "#777", 3);
bands.forEach(band => draw(trace(band), "#2c6140", 3));
const bodies = { r: "", g: "" };
const wicks = { r: "", g: "" };
candles.trim().split(/,\s*/).forEach((row, i) => {
  const [colour, top, bottom, high, low] = row.split(" ");
  const x = (16 + 13.17 * i).toFixed(1);
  bodies[colour] += `M${x} ${top}V${bottom}`;
  wicks[colour] += `M${x} ${high}V${low}`;
});
draw(wicks.r, "#a31a1a", 3);
draw(wicks.g, "#1b9421", 3);
draw(bodies.r, "#dc1818", 9);
draw(bodies.g, "#1dd622", 9);
draw(trace(average), "#f3ecdc", 4);
```
